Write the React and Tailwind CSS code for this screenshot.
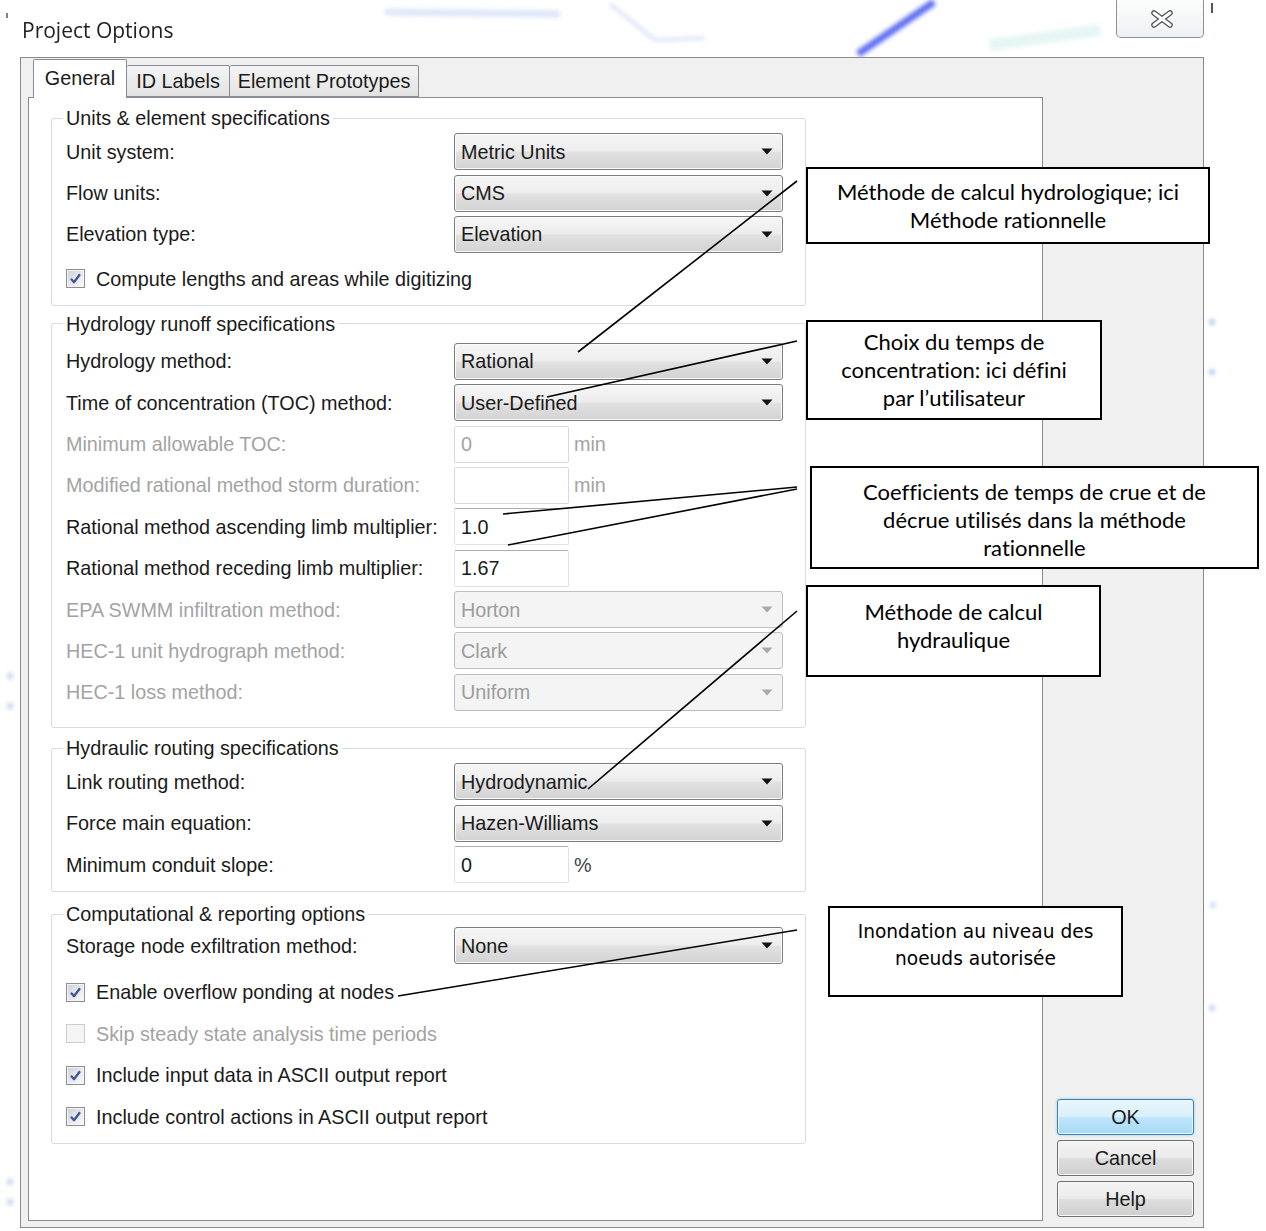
import React from 'react';

// Dialog: Project Options (General tab) with callout notes drawn on top

function Arrow({ disabled }) {
  return (
    <svg width="12" height="7" viewBox="0 0 12 7">
      <path d="M0.5 0.5 H11.5 L6 6.5 Z" fill={disabled ? '#a9a9a9' : '#111111'} />
    </svg>
  );
}

function Select({ value, disabled }) {
  return (
    <div
      className={`flex h-[37px] w-[329px] items-center justify-between rounded-[3px] border pl-[6px] pr-[9px] ${
        disabled
          ? 'border-[#bcc0c3] bg-[#f4f4f4] text-[#9c9c9c]'
          : 'border-[#7d7d7d] bg-[linear-gradient(to_bottom,#f6f6f6_0%,#ededed_48%,#e1e1e1_52%,#d3d3d3_100%)] shadow-[inset_0_0_0_1px_#fbfbfb]'
      }`}
    >
      <span className="leading-[22px]">{value}</span>
      <Arrow disabled={disabled} />
    </div>
  );
}

function TextBox({ value, disabled, unit }) {
  return (
    <div className="flex items-center">
      <div
        className={`flex h-[37px] w-[115px] items-center rounded-[2px] border bg-white pl-[6px] leading-[22px] ${
          disabled
            ? 'border-[#d7dadd] text-[#a3a3a3]'
            : 'border-[#dfe3e8] border-t-[#abadb3] text-[#1a1a1a]'
        }`}
      >
        {value}
      </div>
      {unit && (
        <span className={`ml-[5px] leading-[22px] ${disabled ? 'text-[#a3a3a3]' : 'text-[#444]'}`}>{unit}</span>
      )}
    </div>
  );
}

function Row({ label, disabled, children }) {
  return (
    <div className="flex h-[41.4px] items-center pl-[14px]">
      <span className={`w-[388px] leading-[22px] ${disabled ? 'text-[#a3a3a3]' : ''}`}>{label}</span>
      {children}
    </div>
  );
}

function Check({ label, checked, disabled, className = '' }) {
  return (
    <div className={`flex h-[41.4px] items-center gap-[11px] pl-[14px] ${className}`}>
      <span
        className={`flex h-[19px] w-[19px] items-center justify-center border ${
          disabled
            ? 'border-[#cdcdcd] bg-[#f5f5f5]'
            : 'border-[#8e8f8f] bg-[linear-gradient(135deg,#c9cdd8_0%,#e4e6ee_45%,#fafafa_100%)] shadow-[inset_0_0_0_1px_#f4f4f4]'
        }`}
      >
        {checked && (
          <svg width="13" height="13" viewBox="0 0 13 13">
            <path d="M2 6.8 L5 10.2 L11 2.2" fill="none" stroke="#44578c" strokeWidth="2.3" strokeLinejoin="round" />
          </svg>
        )}
      </span>
      <span className={`leading-[22px] ${disabled ? 'text-[#a3a3a3]' : ''}`}>{label}</span>
    </div>
  );
}

function Group({ title, className = '', children }) {
  return (
    <fieldset className={`w-[755px] rounded-[3px] border border-[#d5dbe0] ${className}`}>
      <legend className="ml-[11px] px-[3px] leading-[22px]">{title}</legend>
      {children}
    </fieldset>
  );
}

function Tab({ label, active, className = '' }) {
  return (
    <div
      className={`flex items-center justify-center rounded-t-[2px] border border-[#898c95] leading-[22px] ${
        active
          ? 'relative z-10 -mb-px h-[39px] border-b-0 bg-white pb-[3px]'
          : 'h-[32px] bg-[linear-gradient(to_bottom,#f4f4f4,#e3e3e3)]'
      } ${className}`}
    >
      {label}
    </div>
  );
}

function Button({ label, primary }) {
  return (
    <button
      className={`flex h-[36px] w-[137px] items-center justify-center rounded-[3px] border leading-[22px] ${
        primary
          ? 'border-[#3c7fb1] bg-[linear-gradient(to_bottom,#eaf6fd_0%,#d9f0fc_48%,#bee6fd_52%,#a7d9f5_100%)] shadow-[inset_0_0_0_1px_#e9f7fe,0_0_3px_#7fd0f5]'
          : 'border-[#707070] bg-[linear-gradient(to_bottom,#f4f4f4_0%,#ebebeb_48%,#dddddd_52%,#cfcfcf_100%)] shadow-[inset_0_0_0_1px_#f8f8f8]'
      }`}
    >
      {label}
    </button>
  );
}

function CloseButton() {
  return (
    <div className="mr-[62px] flex h-[38px] w-[88px] items-center justify-center rounded-b-[5px] border border-t-0 border-[#8d9196] bg-[linear-gradient(to_bottom,#fdfdfd,#eef1f3)] pl-[4px]">
      <svg width="26" height="20" viewBox="0 0 26 20">
        <path d="M5 4 L21 16 M21 4 L5 16" stroke="#4f5257" strokeWidth="5.5" strokeLinecap="round" />
        <path d="M5 4 L21 16 M21 4 L5 16" stroke="#ffffff" strokeWidth="3" strokeLinecap="round" />
      </svg>
    </div>
  );
}

// faint map strokes from the window behind the dialog
function Backdrop() {
  return (
    <svg className="pointer-events-none absolute inset-0" width="1266" height="1231">
      <defs>
        <filter id="soft" x="-20%" y="-20%" width="140%" height="140%">
          <feGaussianBlur stdDeviation="2" />
        </filter>
      </defs>
      <g filter="url(#soft)">
        <path d="M385 12 L560 14" stroke="#c9d6f2" strokeWidth="7" opacity="0.6" />
        <path d="M610 4 L655 40 L705 38" stroke="#c4d1f0" strokeWidth="3" fill="none" opacity="0.7" />
        <path d="M858 54 L934 2" stroke="#4d5ff2" strokeWidth="7" opacity="0.9" />
        <path d="M990 45 L1100 30" stroke="#d6f0ee" strokeWidth="12" opacity="0.6" />
        <circle cx="1212" cy="322" r="3" fill="#8fb0e0" opacity="0.7" />
        <circle cx="1212" cy="372" r="3" fill="#8fb0e0" opacity="0.7" />
        <circle cx="1213" cy="552" r="3" fill="#8fb0e0" opacity="0.6" />
        <circle cx="1213" cy="905" r="3" fill="#8fb0e0" opacity="0.5" />
        <circle cx="1212" cy="1008" r="3" fill="#8fb0e0" opacity="0.6" />
        <circle cx="10" cy="676" r="3" fill="#8fb0e0" opacity="0.6" />
        <circle cx="10" cy="706" r="3" fill="#8fb0e0" opacity="0.6" />
        <circle cx="10" cy="1182" r="3" fill="#8fb0e0" opacity="0.6" />
        <circle cx="10" cy="1202" r="3" fill="#8fb0e0" opacity="0.6" />
      </g>
      <path d="M7 13 L7 18" stroke="#555" strokeWidth="1.5" />
      <path d="M1212 3 L1212 13" stroke="#555" strokeWidth="2" />
    </svg>
  );
}

// callout lines from the notes to the fields
function Leaders() {
  const lines = [
    [797, 181, 578, 352],
    [797, 341, 547, 397],
    [797, 487, 503, 514],
    [797, 489, 508, 545],
    [797, 611, 588, 789],
    [797, 930, 398, 996],
  ];
  return (
    <svg className="pointer-events-none absolute inset-0 z-20" width="1266" height="1231">
      {lines.map(([x1, y1, x2, y2], i) => (
        <line key={i} x1={x1} y1={y1} x2={x2} y2={y2} stroke="#000" strokeWidth="1.6" />
      ))}
    </svg>
  );
}

function Note({ className, children }) {
  return (
    <div className={`absolute z-20 border-2 border-black bg-white text-center text-black [font-variant-ligatures:none] ${className}`}>
      {children}
    </div>
  );
}

export default function App() {
  return (
    <div className="relative h-[1231px] w-[1266px] overflow-hidden bg-white font-['Liberation_Sans',Arial,sans-serif] text-[19.8px] text-[#1a1a1a]">
      <Backdrop />

      <header className="relative flex h-[57px] items-start justify-between">
        <h1 className="pl-[22px] pt-[16px] font-['Open_Sans',sans-serif] text-[21px] leading-[28px] text-[#222]">Project Options</h1>
        <CloseButton />
      </header>

      <div className="relative ml-[20px] flex h-[1171px] w-[1184px] flex-col border border-[#8a8a8a] bg-[#f0f0f0]">
        <div className="flex h-[39px] items-end pl-[12px]">
          <Tab label="General" active className="w-[94px]" />
          <Tab label="ID Labels" className="w-[103px] border-l-0" />
          <Tab label="Element Prototypes" className="w-[189px] border-l-0" />
        </div>

        <div className="flex flex-1 pb-[6px]">
          <div className="ml-[7px] w-[1015px] border border-[#898c95] bg-white pl-[22px] pt-[9px]">
            <Group title="Units & element specifications" className="pb-[5px] pt-[2px]">
              <Row label="Unit system:"><Select value="Metric Units" /></Row>
              <Row label="Flow units:"><Select value="CMS" /></Row>
              <Row label="Elevation type:"><Select value="Elevation" /></Row>
              <Check label="Compute lengths and areas while digitizing" checked className="mt-[3px]" />
            </Group>

            <Group title="Hydrology runoff specifications" className="mt-[7px] pb-[14px] pt-[6px]">
              <Row label="Hydrology method:"><Select value="Rational" /></Row>
              <Row label="Time of concentration (TOC) method:"><Select value="User-Defined" /></Row>
              <Row label="Minimum allowable TOC:" disabled><TextBox value="0" unit="min" disabled /></Row>
              <Row label="Modified rational method storm duration:" disabled><TextBox value="" unit="min" disabled /></Row>
              <Row label="Rational method ascending limb multiplier:"><TextBox value="1.0" /></Row>
              <Row label="Rational method receding limb multiplier:"><TextBox value="1.67" /></Row>
              <Row label="EPA SWMM infiltration method:" disabled><Select value="Horton" disabled /></Row>
              <Row label="HEC-1 unit hydrograph method:" disabled><Select value="Clark" disabled /></Row>
              <Row label="HEC-1 loss method:" disabled><Select value="Uniform" disabled /></Row>
            </Group>

            <Group title="Hydraulic routing specifications" className="mt-[9px] pb-[6px] pt-[2px]">
              <Row label="Link routing method:"><Select value="Hydrodynamic" /></Row>
              <Row label="Force main equation:"><Select value="Hazen-Williams" /></Row>
              <Row label="Minimum conduit slope:"><TextBox value="0" unit="%" /></Row>
            </Group>

            <Group title="Computational & reporting options" className="mt-[11px] pb-[6px]">
              <Row label="Storage node exfiltration method:"><Select value="None" /></Row>
              <Check label="Enable overflow ponding at nodes" checked className="mt-[5px]" />
              <Check label="Skip steady state analysis time periods" disabled />
              <Check label="Include input data in ASCII output report" checked />
              <Check label="Include control actions in ASCII output report" checked />
            </Group>
          </div>

          <div className="flex flex-1 flex-col justify-end gap-[5px] pb-[4px] pl-[14px]">
            <Button label="OK" primary />
            <Button label="Cancel" />
            <Button label="Help" />
          </div>
        </div>
      </div>

      <Leaders />

      <div className="font-['Lato','Open_Sans',sans-serif] text-[22px] leading-[28px]">
        <Note className="left-[806px] top-[167px] h-[77px] w-[404px] pt-[9px]">
          Méthode de calcul hydrologique; ici
          <br />
          Méthode rationnelle
        </Note>
        <Note className="left-[806px] top-[320px] h-[100px] w-[296px] pt-[6px]">
          Choix du temps de
          <br />
          concentration: ici défini
          <br />
          par l’utilisateur
        </Note>
        <Note className="left-[810px] top-[466px] h-[103px] w-[449px] pt-[10px]">
          Coefficients de temps de crue et de
          <br />
          décrue utilisés dans la méthode
          <br />
          rationnelle
        </Note>
        <Note className="left-[806px] top-[585px] h-[92px] w-[295px] pt-[11px]">
          Méthode de calcul
          <br />
          hydraulique
        </Note>
      </div>
      <Note className="left-[828px] top-[906px] h-[91px] w-[295px] pt-[10px] font-['DejaVu_Sans',sans-serif] text-[18.6px] leading-[27px]">
        Inondation au niveau des
        <br />
        noeuds autorisée
      </Note>
    </div>
  );
}
